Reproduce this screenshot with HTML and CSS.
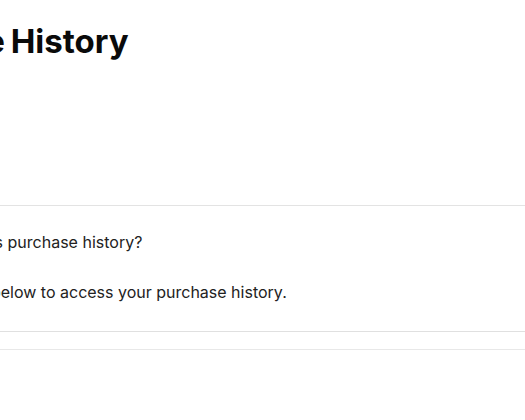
FILE: index.html
```html
<!DOCTYPE html>
<html lang="en">
<head>
<meta charset="utf-8">
<title>Purchase History</title>
<link rel="stylesheet" href="styles.css">
</head>
<body>
<main class="page">
  <h1 class="title">Purchase History</h1>
  <section class="faq">
    <p class="question">How do I view my team's purchase history?</p>
    <p class="answer">Use the button below to access your purchase history.</p>
  </section>
  <div class="footer-rule"></div>
</main>
</body>
</html>
```
FILE: styles.css
```css
html, body { margin: 0; padding: 0; background: #fff; }
body { font-family: Inter, "Noto Sans", sans-serif; color: #222; overflow: hidden; }
.page { width: 525px; }
.title { margin: 0; padding-top: 21px; height: 184px; font-size: 33px; font-weight: 700; color: #0a0a0a; line-height: 40px; white-space: nowrap; word-spacing: -2px; text-indent: -147px; }
.faq { border-top: 1px solid #e3e3e3; border-bottom: 1px solid #e0e0e0; padding: 24px 0 27px; }
.question { margin: 0; font-size: 16px; line-height: 24px; white-space: nowrap; text-indent: -186px; }
.answer { margin: 26px 0 0; font-size: 16px; line-height: 24px; white-space: nowrap; text-indent: -124.5px; }
.footer-rule { border-top: 1px solid #e8e8e8; margin-top: 17px; }
```
